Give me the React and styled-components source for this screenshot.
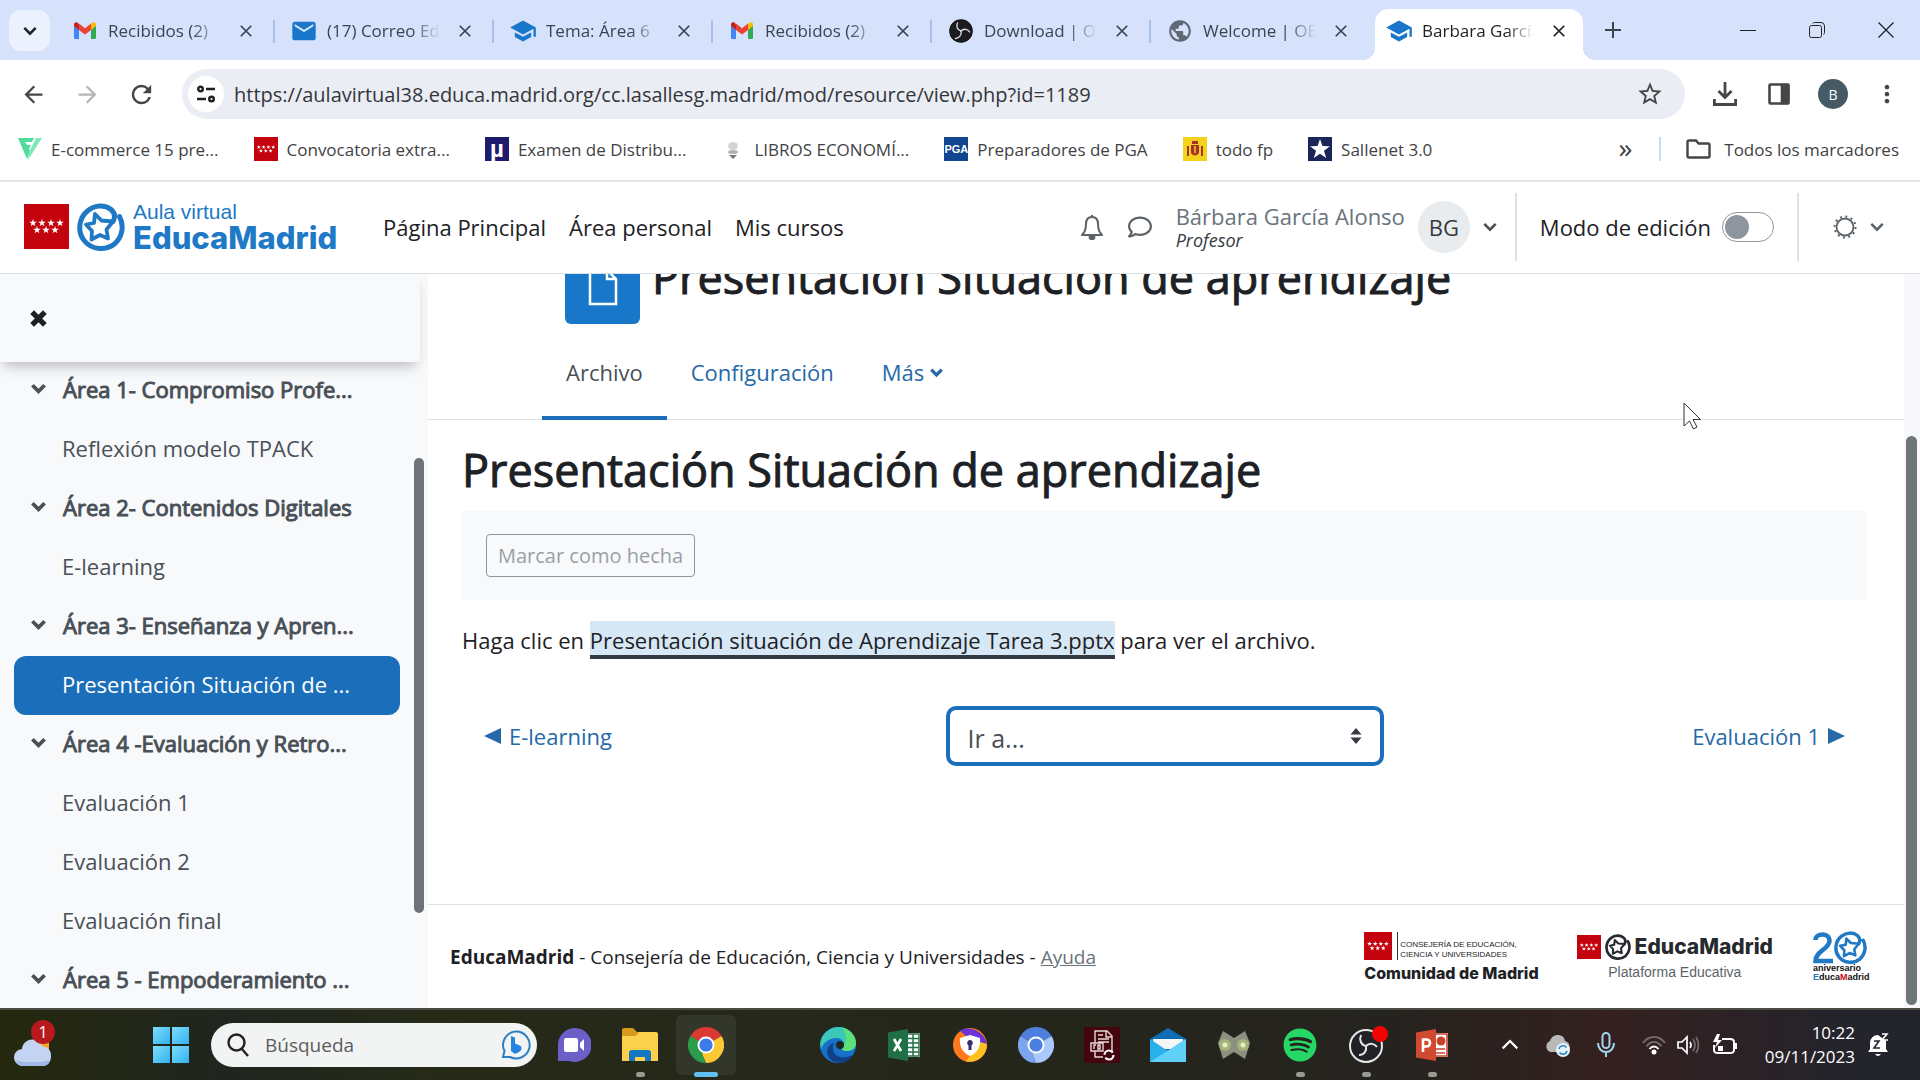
import React from 'react';
import styled, { createGlobalStyle } from 'styled-components';
import { MdSchool, MdEmail, MdArrowBack, MdArrowForward, MdRefresh, MdStarBorder, MdMoreVert, MdPublic } from 'react-icons/md';
import { FaSpotify, FaRegComment } from 'react-icons/fa';

const UI_FONT = "'Open Sans', 'Noto Sans', sans-serif";
const LOGO_FONT = "Inter, 'Liberation Sans', sans-serif";
const BLUE = '#1b6fba';
const LINK = '#2569a8';

const GlobalStyle = createGlobalStyle`
  * { box-sizing: border-box; }
  body {
    margin: 0;
    overflow: hidden;
    font-family: ${UI_FONT};
    font-size: 22px;
    color: #1d2125;
  }
  button {
    font: inherit;
    color: inherit;
    border: 0;
    padding: 0;
    background: none;
  }
  a { color: inherit; text-decoration: none; }
  svg { display: block; flex: none; }
`;

const Screen = styled.div`
  display: flex;
  flex-direction: column;
  height: 100vh;
  background: #fff;
`;

/* ---------- icons ---------- */

const Chevron = ({ size = 14, up, width = 3 }) => (
  <svg width={size} height={size} viewBox="0 0 16 16" fill="none" stroke="currentColor" strokeWidth={width}>
    <path d={up ? 'M1.5 11 8 4.5 14.5 11' : 'M1.5 4.5 8 11l6.5-6.5'} />
  </svg>
);

const Cross = ({ size = 14, width = 2 }) => (
  <svg width={size} height={size} viewBox="0 0 16 16" stroke="currentColor" strokeWidth={width}>
    <path d="M2 2 14 14M14 2 2 14" />
  </svg>
);

const Gmail = () => (
  <svg width="24" height="24" viewBox="0 0 24 24">
    <path fill="#4285f4" d="M1 5v13.500Q1 20 2.500 20H6V9z" />
    <path fill="#34a853" d="M23 5v13.500q0 1.500-1.500 1.500H18V9z" />
    <path fill="#fbbc04" d="M18 5.500V11l5-4V5.500c0-2.300-2.300-3-4-1.700z" />
    <path fill="#c5221f" d="M1 7l5 4V5.500L4.800 3.700C3.200 2.700 1 3.500 1 5.500z" />
    <path fill="#ea4335" d="M6 11V4.600l6 4.600 6-4.600V11l-6 4.500z" />
  </svg>
);

const ObsIcon = () => (
  <svg width="24" height="24" viewBox="0 0 24 24">
    <circle cx="12" cy="12" r="11.200" fill="#1c1c20" stroke="#141618" strokeWidth="1.200" />
    <g fill="none" stroke="#dde2e6" strokeWidth="1.300" strokeLinecap="round">
      <path d="M12 12C8 11 7 7 8.500 4" />
      <path d="M12 12c3-3 7-1.700 8.600 1" />
      <path d="M12 12c1 4-2 7-5.500 7.500" />
    </g>
  </svg>
);

const STARS = [[9, 19], [18, 19], [27, 19], [36, 19], [13, 26], [22, 26], [31, 26]];
const starPath = (cx, cy, r, inner = 0.4) => {
  let d = '';
  for (let i = 0; i < 10; i += 1) {
    const a = (Math.PI / 5) * i - Math.PI / 2;
    const k = i % 2 ? r * inner : r;
    d += `${i ? 'L' : 'M'}${cx + k * Math.cos(a)} ${cy + k * Math.sin(a)}`;
  }
  return `${d}Z`;
};

const MadridFlag = ({ size = 45 }) => (
  <svg width={size} height={size} viewBox="0 0 45 45">
    <path fill="#c3040f" d="M0 0h45v45H0z" />
    {STARS.map(([x, y]) => <path key={`${x}-${y}`} fill="#fff" d={starPath(x, y, 4)} />)}
  </svg>
);

const EducaStar = ({ size = 48, color = '#2079c5' }) => (
  <svg width={size} height={size} viewBox="0 0 48 48" fill="none" stroke={color} strokeLinejoin="round" strokeLinecap="round">
    <path strokeWidth="5" d="M42.500 13.500C47 22 46 33 38 40.500 29 48 15 47 7.500 38 0 29 1.500 15 11 7.500 18 2 28 1.500 34 6.500c4 3.500 4.500 7.500 2 12" />
    <path strokeWidth="3.800" d="M18 11l6.500 6.500 11.500 1-6.500 8 1.500 9-8-3.500-8.500 4.500.5-8.500L9 21.500l8-1.500z" />
  </svg>
);

const Bell = () => (
  <svg width="24" height="26" viewBox="0 0 24 26" fill="none" stroke="currentColor" strokeWidth="2" strokeLinejoin="round">
    <path d="M12 3C8 3 6 6 6 10c0 6-1.500 8.500-4 11h20c-2.500-2.500-4-5-4-11 0-4-2-7-6-7z" />
    <path d="M12 1v2M9.500 23a2.500 2.200 0 0 0 5 0z" fill="currentColor" />
  </svg>
);

const Sun = () => (
  <svg width="24" height="24" viewBox="0 0 24 24" fill="none" stroke="currentColor">
    <circle cx="12" cy="12" r="8.500" strokeWidth="1.800" />
    <circle cx="12" cy="12" r="10.500" strokeWidth="2" strokeDasharray="2 3.500" />
  </svg>
);

const Tune = () => (
  <svg width="20" height="20" viewBox="0 0 20 20" fill="none" stroke="#1f1f1f" strokeWidth="2.400">
    <circle cx="4.500" cy="5" r="2.300" />
    <path d="M10 5h9M1 15h9" />
    <circle cx="15.500" cy="15" r="2.300" />
  </svg>
);

const Download = () => (
  <svg width="26" height="26" viewBox="0 0 26 26" fill="none" stroke="#444746" strokeWidth="2.800">
    <path d="M13 1v15M6.500 10 13 16.500 19.500 10M2.400 18v5.500h21.200V18" />
  </svg>
);

const SidePanel = () => (
  <svg width="22" height="22" viewBox="0 0 22 22" fill="none" stroke="#444746" strokeWidth="2.600">
    <rect x="1.500" y="1.500" width="19" height="19" rx="1" />
    <path fill="#444746" d="M14 2h6v18h-6z" />
  </svg>
);

const FolderOutline = () => (
  <svg width="25" height="20" viewBox="0 0 25 20" fill="none" stroke="#444746" strokeWidth="2.400">
    <path d="M3 1.500h7l2.500 3H22q1.500 0 1.500 1.500v11q0 1.500-1.500 1.500H3q-1.500 0-1.500-1.500V3q0-1.500 1.500-1.500z" />
  </svg>
);

/* ---------- tab strip ---------- */

const TabStrip = styled.div`
  display: flex;
  align-items: flex-end;
  flex: none;
  height: 60px;
  padding-left: 9px;
  background: #d6e2fb;
`;

const TabSearch = styled.button`
  display: grid;
  place-items: center;
  width: 41px;
  height: 41px;
  margin: 0 6px 9px 0;
  border-radius: 12px;
  background: #ebf2fe;
`;

const Tab = styled.div`
  position: relative;
  display: flex;
  align-items: center;
  flex: 0 1 219px;
  min-width: 0;
  height: 51px;
  padding: 0 22px 8px 17px;
  color: #3c4450;

  &::after {
    content: '';
    position: absolute;
    right: 0;
    top: 11px;
    width: 2px;
    height: 23px;
    background: ${(p) => (p.$plain ? 'transparent' : '#a9c0ee')};
  }
`;

const ActiveTab = styled(Tab)`
  flex: 0 1 208px;
  margin: 0 5px;
  padding: 0 17px 8px 12px;
  border-radius: 14px 14px 0 0;
  background: #fff;
  color: #1f1f1f;

  &::before,
  &::after {
    content: '';
    position: absolute;
    top: auto;
    bottom: 0;
    width: 12px;
    height: 12px;
  }
  &::before {
    left: -12px;
    background: radial-gradient(circle at 0 0, transparent 12px, #fff 12px);
  }
  &::after {
    right: -12px;
    background: radial-gradient(circle at 100% 0, transparent 12px, #fff 12px);
  }
`;

const TabTitle = styled.span`
  flex: 1;
  margin: 0 18px 0 11px;
  overflow: hidden;
  white-space: nowrap;
  font-size: 17px;
  mask-image: linear-gradient(to right, #000 75%, transparent 100%);
`;

const NewTab = styled.button`
  display: grid;
  place-items: center;
  width: 40px;
  height: 60px;
  margin-left: 5px;
`;

const WindowButtons = styled.div`
  display: flex;
  margin-left: auto;

  button {
    display: grid;
    place-items: center;
    width: 69px;
    height: 60px;
  }
`;

const TABS = [
  { icon: <Gmail />, title: 'Recibidos (2)' },
  { icon: <MdEmail size={28} color="#1877c9" />, title: '(17) Correo Edu' },
  { icon: <MdSchool size={28} color="#1877c9" />, title: 'Tema: Área 6 |' },
  { icon: <Gmail />, title: 'Recibidos (2)' },
  { icon: <ObsIcon />, title: 'Download | OBS' },
  { icon: <MdPublic size={26} color="#5f6774" />, title: 'Welcome | OBS' },
];

const TabIcon = styled.span`
  display: flex;
  justify-content: center;
  flex: none;
  width: 24px;
`;

const BrowserTabs = () => (
  <TabStrip>
    <TabSearch aria-label="Buscar pestañas"><Chevron /></TabSearch>
    {TABS.map((tab, i) => (
      <Tab key={tab.title + String(i)} $plain={i === TABS.length - 1}>
        <TabIcon>{tab.icon}</TabIcon>
        <TabTitle>{tab.title}</TabTitle>
        <button aria-label="Cerrar pestaña"><Cross /></button>
      </Tab>
    ))}
    <ActiveTab>
      <TabIcon><MdSchool size={28} color="#1877c9" /></TabIcon>
      <TabTitle>Barbara García</TabTitle>
      <button aria-label="Cerrar pestaña"><Cross /></button>
    </ActiveTab>
    <NewTab aria-label="Nueva pestaña">
      <svg width="16" height="16" viewBox="0 0 16 16" stroke="#3c4450" strokeWidth="2"><path d="M8 0v16M0 8h16" /></svg>
    </NewTab>
    <WindowButtons>
      <button aria-label="Minimizar">
        <svg width="16" height="16" stroke="#222"><path d="M0 8.500h16" /></svg>
      </button>
      <button aria-label="Restaurar">
        <svg width="16" height="16" fill="none" stroke="#222">
          <rect x=".5" y="3.500" width="12" height="12" rx="2" />
          <path d="M3.500 1.500q1-1 2-1H12q3.500 0 3.500 3.500v6.500q0 1.500-1 2" />
        </svg>
      </button>
      <button aria-label="Cerrar"><Cross size={20} width={1} /></button>
    </WindowButtons>
  </TabStrip>
);

/* ---------- address bar ---------- */

const Toolbar = styled.div`
  display: flex;
  align-items: center;
  flex: none;
  height: 68px;
  padding: 0 6px;
  color: #444746;
`;

const ToolButton = styled.button`
  display: grid;
  place-items: center;
  width: 54px;
  height: 50px;
  color: ${(p) => (p.$dim ? '#b4b6b8' : '#444746')};
`;

const AddressBar = styled.div`
  display: flex;
  align-items: center;
  flex: 1;
  height: 50px;
  margin: 0 13px 0 14px;
  padding: 0 21px 0 6px;
  border-radius: 25px;
  background: #ebedf5;
`;

const SiteInfo = styled.button`
  display: grid;
  place-items: center;
  width: 36px;
  height: 36px;
  border-radius: 50%;
  background: #fff;
`;

const Url = styled.input`
  flex: 1;
  margin-left: 10px;
  padding: 0;
  border: 0;
  background: none;
  font: 20px ${UI_FONT};
  color: #33363a;
  outline: 0;
`;

const Profile = styled.span`
  display: grid;
  place-items: center;
  width: 30px;
  height: 30px;
  border-radius: 50%;
  background: #455a64;
  color: #fff;
  font-size: 14px;
`;

const AddressRow = () => (
  <Toolbar>
    <ToolButton aria-label="Atrás"><MdArrowBack size={27} /></ToolButton>
    <ToolButton aria-label="Adelante" $dim><MdArrowForward size={27} /></ToolButton>
    <ToolButton aria-label="Recargar"><MdRefresh size={29} /></ToolButton>
    <AddressBar>
      <SiteInfo aria-label="Información del sitio"><Tune /></SiteInfo>
      <Url aria-label="Dirección" defaultValue="https://aulavirtual38.educa.madrid.org/cc.lasallesg.madrid/mod/resource/view.php?id=1189" />
      <MdStarBorder size={28} />
    </AddressBar>
    <ToolButton aria-label="Descargas"><Download /></ToolButton>
    <ToolButton aria-label="Panel lateral"><SidePanel /></ToolButton>
    <ToolButton aria-label="Perfil"><Profile>B</Profile></ToolButton>
    <ToolButton aria-label="Menú"><MdMoreVert size={28} /></ToolButton>
  </Toolbar>
);

/* ---------- bookmarks ---------- */

const Bookmarks = styled.div`
  display: flex;
  align-items: center;
  flex: none;
  gap: 35px;
  height: 54px;
  padding: 0 21px 10px 18px;
  border-bottom: 2px solid #e6e6e6;
  font-size: 17px;
  color: #3f4246;
  white-space: nowrap;
`;

const Bookmark = styled.a`
  display: flex;
  align-items: center;
  gap: 9px;
`;

const MoreBookmarks = styled.button`
  margin-left: auto;
  padding-bottom: 5px;
  font-size: 28px;
  line-height: 28px;
`;

const AllBookmarks = styled(Bookmark)`
  gap: 13px;
  height: 24px;
  margin-left: -8px;
  padding-left: 25px;
  border-left: 2px solid #c8dcec;
`;

const Badge = styled.span`
  display: grid;
  place-items: center;
  width: 24px;
  height: 24px;
  background: ${(p) => p.$bg};
  color: #fff;
  font: 700 ${(p) => p.$size}px/1 'Liberation Sans', sans-serif;
`;

const BOOKMARKS = [
  {
    text: 'E-commerce 15 pre...',
    icon: (
      <svg width="24" height="24" viewBox="0 0 24 24">
        <path fill="#4fdc9a" d="M0 1h16l-2 4H7l2 3h4l-2 4 1 2-3 8z" />
        <path fill="#7fe8bb" d="M18 1h6L10 23l1-8z" />
      </svg>
    ),
  },
  { text: 'Convocatoria extra...', icon: <MadridFlag size={24} /> },
  { text: 'Examen de Distribu...', icon: <Badge $bg="#1f1c6e" $size={24}>µ</Badge> },
  {
    text: 'LIBROS ECONOMÍ...',
    icon: (
      <svg width="24" height="24" viewBox="0 0 24 24">
        <ellipse cx="12" cy="9" rx="5" ry="4" fill="#d4d4d4" />
        <ellipse cx="12" cy="15" rx="5" ry="2" fill="#b3b3b3" />
        <path fill="#777" d="M8 18h8l-4 4z" />
      </svg>
    ),
  },
  { text: 'Preparadores de PGA', icon: <Badge $bg="#114590" $size={11}>PGA</Badge> },
  {
    text: 'todo fp',
    icon: (
      <svg width="24" height="24" viewBox="0 0 24 24">
        <path fill="#f2d21b" d="M0 0h24v24H0z" />
        <path fill="#a8322a" d="M8 8h8v8q-4 5-8 0zM9 4h6v3H9zM4 9h2v10H4zM18 9h2v10h-2z" />
        <path fill="#d9a441" d="M11 9h2v7h-2z" />
      </svg>
    ),
  },
  {
    text: 'Sallenet 3.0',
    icon: (
      <svg width="24" height="24" viewBox="0 0 24 24">
        <path fill="#1c2558" d="M0 0h24v24H0z" />
        <path fill="#fff" d={starPath(12, 12.5, 10.5)} />
      </svg>
    ),
  },
];

const BookmarksBar = () => (
  <Bookmarks>
    {BOOKMARKS.map((b) => <Bookmark key={b.text} href="#">{b.icon}{b.text}</Bookmark>)}
    <MoreBookmarks aria-label="Más marcadores">»</MoreBookmarks>
    <AllBookmarks href="#"><FolderOutline />Todos los marcadores</AllBookmarks>
  </Bookmarks>
);

/* ---------- site header ---------- */

const SiteHeader = styled.header`
  display: flex;
  align-items: center;
  flex: none;
  height: 92px;
  padding: 0 36px 2px 24px;
  border-bottom: 1px solid #dcdfe2;
  white-space: nowrap;
`;

const Logo = styled.a`
  display: flex;
  align-items: center;
  gap: 8px;
  width: 359px;
  color: #2079c5;
`;

const LogoText = styled.span`
  display: flex;
  flex-direction: column;
  font: 21px/22px 'Liberation Sans', sans-serif;

  b {
    font: 800 31px/30px ${LOGO_FONT};
  }
`;

const SiteNav = styled.nav`
  display: flex;
  gap: 23px;
  flex: 1;
`;

const HeaderIcons = styled.div`
  display: flex;
  gap: 24px;
  margin-right: 24px;
  color: #5c6368;
`;

const UserMenu = styled.button`
  display: flex;
  align-items: center;
  gap: 13px;
  height: 68px;
  padding-right: 18px;
  border-right: 2px solid #dee2e6;
  color: #495057;
  text-align: left;
`;

const UserName = styled.span`
  display: flex;
  flex-direction: column;
  line-height: 26px;
  color: #6a737b;

  em {
    font-size: 18px;
    line-height: 22px;
    color: #343a40;
  }
`;

const Initials = styled.span`
  display: grid;
  place-items: center;
  width: 52px;
  height: 52px;
  border-radius: 50%;
  background: #e9ecef;
  color: #343a40;
`;

const EditMode = styled.label`
  display: flex;
  align-items: center;
  gap: 11px;
  height: 68px;
  padding: 0 23px;
  border-right: 2px solid #dee2e6;
`;

const Switch = styled.input`
  appearance: none;
  width: 52px;
  height: 30px;
  margin: 0;
  padding: 2px;
  border: 1px solid #8f959e;
  border-radius: 15px;

  &::before {
    content: '';
    display: block;
    width: 24px;
    height: 24px;
    border-radius: 50%;
    background: #8f959e;
  }
`;

const ThemeMenu = styled.button`
  display: flex;
  align-items: center;
  gap: 13px;
  padding-left: 34px;
  color: #5c6368;
`;

const Header = () => (
  <SiteHeader>
    <Logo href="#">
      <MadridFlag />
      <EducaStar />
      <LogoText>Aula virtual<b>EducaMadrid</b></LogoText>
    </Logo>
    <SiteNav>
      <a href="#">Página Principal</a>
      <a href="#">Área personal</a>
      <a href="#">Mis cursos</a>
    </SiteNav>
    <HeaderIcons>
      <button aria-label="Notificaciones"><Bell /></button>
      <button aria-label="Mensajes"><FaRegComment size={24} /></button>
    </HeaderIcons>
    <UserMenu>
      <UserName>Bárbara García Alonso<em>Profesor</em></UserName>
      <Initials>BG</Initials>
      <Chevron />
    </UserMenu>
    <EditMode>
      Modo de edición
      <Switch type="checkbox" role="switch" />
    </EditMode>
    <ThemeMenu aria-label="Tema"><Sun /><Chevron /></ThemeMenu>
  </SiteHeader>
);

/* ---------- course index ---------- */

const Body = styled.div`
  display: flex;
  flex: 1;
  min-height: 0;
`;

const Drawer = styled.aside`
  display: flex;
  flex-direction: column;
  flex: none;
  width: 428px;
  background: #f8f9fb;
  overflow: hidden;
`;

const DrawerTop = styled.div`
  z-index: 1;
  display: flex;
  align-items: center;
  flex: none;
  height: 88px;
  margin-right: 8px;
  padding: 0 30px;
  background: #f8f9fb;
  box-shadow: 0 8px 12px -4px rgba(0, 0, 0, .25);
`;

const DrawerScroll = styled.div`
  display: flex;
  flex: 1;
  min-height: 0;
  padding: 0 4px 0 14px;
`;

const Index = styled.ul`
  flex: 1;
  margin: -1px 14px 0 0;
  padding: 0;
  list-style: none;
`;

const IndexRow = styled.li`
  display: flex;
  align-items: center;
  gap: 17px;
  height: 59px;
  padding: 0 0 4px ${(p) => (p.$section ? 17 : 48)}px;
  border-radius: 12px;
  background: ${(p) => (p.$active ? BLUE : 'transparent')};
  color: ${(p) => (p.$active ? '#fff' : '#495057')};
  -webkit-text-stroke: ${(p) => (p.$section ? '1px' : '0')};
  white-space: nowrap;
`;

const Thumb = styled.div`
  flex: none;
  width: ${(p) => p.$width}px;
  height: ${(p) => p.$height}px;
  margin-top: ${(p) => p.$top}px;
  border-radius: 6px;
  background: ${(p) => p.$color};
`;

const INDEX = [
  { text: 'Área 1- Compromiso Profe...', section: true },
  { text: 'Reflexión modelo TPACK' },
  { text: 'Área 2- Contenidos Digitales', section: true },
  { text: 'E-learning' },
  { text: 'Área 3- Enseñanza y Apren...', section: true },
  { text: 'Presentación Situación de ...', active: true },
  { text: 'Área 4 -Evaluación y Retro...', section: true },
  { text: 'Evaluación 1' },
  { text: 'Evaluación 2' },
  { text: 'Evaluación final' },
  { text: 'Área 5 - Empoderamiento ...', section: true },
];

const CourseIndex = () => (
  <Drawer>
    <DrawerTop>
      <button aria-label="Cerrar índice"><Cross size={17} width={5} /></button>
    </DrawerTop>
    <DrawerScroll>
      <Index>
        {INDEX.map((row) => (
          <IndexRow key={row.text} $section={row.section} $active={row.active}>
            {row.section && <Chevron size={15} width={4} />}
            <a href="#">{row.text}</a>
          </IndexRow>
        ))}
      </Index>
      <Thumb $width={10} $height={455} $top={96} $color="#6f7277" />
    </DrawerScroll>
  </Drawer>
);

/* ---------- page ---------- */

// the page is scrolled to its end, so the content hangs from the bottom edge
const Page = styled.main`
  display: flex;
  flex-direction: column;
  justify-content: flex-end;
  flex: 1;
  min-width: 0;
  overflow: hidden;
`;

const ActivityHeader = styled.div`
  display: flex;
  gap: 12px;
  padding-left: 137px;
`;

const ActivityIcon = styled.span`
  display: grid;
  place-items: center;
  width: 75px;
  height: 75px;
  border-radius: 6px;
  background: #1877c9;
`;

const Title = styled.h1`
  margin: 0;
  font-size: 45px;
  line-height: 56px;
  font-weight: 400;
  -webkit-text-stroke: 1px;
  white-space: nowrap;
`;

const PageTabs = styled.nav`
  display: flex;
  height: 96px;
  padding-left: 114px;
  border-bottom: 1px solid #dee2e6;
`;

const PageTab = styled.a`
  display: flex;
  align-items: center;
  gap: 6px;
  height: 96px;
  padding: 4px 24px 0;
  border-bottom: 4px solid ${(p) => (p.$active ? BLUE : 'transparent')};
  color: ${(p) => (p.$active ? '#495057' : LINK)};
`;

const Content = styled.section`
  padding: 22px 37px 0 34px;
`;

const Completion = styled.div`
  margin: 13px 0 21px;
  padding: 23px 24px;
  background: #f8f9fa;

  button {
    height: 43px;
    padding: 0 11px;
    border: 1px solid #8f959e;
    border-radius: 4px;
    font-size: 20px;
    color: #9a9fa5;
  }
`;

const Instruction = styled.p`
  margin: 0;
  line-height: 30px;

  a {
    display: inline-block;
    padding-top: 4px;
    border-bottom: 4px solid #343a40;
    background: #d6e7f5;
  }
`;

const Pager = styled.div`
  display: grid;
  grid-template-columns: 1fr 438px 1fr;
  align-items: center;
  margin: 47px 22px 138px;
  color: ${LINK};

  > :last-child { justify-self: end; }
`;

const PagerLink = styled.a`
  display: flex;
  align-items: center;
  gap: 8px;
`;

const JumpTo = styled.div`
  position: relative;

  select {
    appearance: none;
    display: block;
    width: 100%;
    height: 60px;
    padding: 4px 18px 0;
    border: 4px solid ${BLUE};
    border-radius: 10px;
    background: #fff;
    font: 25px ${UI_FONT};
    color: #495057;
  }
  svg {
    position: absolute;
    right: 22px;
    top: 22px;
  }
`;

const PageFooter = styled.footer`
  display: flex;
  align-items: center;
  flex: none;
  height: 104px;
  padding: 0 35px 0 22px;
  border-top: 1px solid #dee2e6;
  font-size: 19px;
  white-space: nowrap;

  p { flex: 1; margin: 0; }
  p a { color: #6a737b; text-decoration: underline; }
`;

const Comunidad = styled.div`
  margin-right: 38px;
  font: 800 16px/18px ${LOGO_FONT};

  div {
    display: flex;
    align-items: flex-end;
    gap: 5px;
    margin-bottom: 4px;
    font: 8px/10px 'Liberation Sans', sans-serif;
  }
  span {
    padding-left: 2px;
    border-left: 1px solid #333;
    padding-top: 8px;
  }
`;

const Platform = styled.div`
  display: grid;
  grid-template-columns: auto auto auto;
  align-items: center;
  gap: 4px;
  margin-right: 40px;
  font: 800 21px/24px ${LOGO_FONT};
  color: #26292e;

  small {
    grid-column: 1 / -1;
    justify-self: center;
    font: 14px/16px 'Liberation Sans', sans-serif;
    color: #5c6368;
  }
`;

const Anniversary = styled.div`
  display: flex;
  flex-wrap: wrap;
  align-items: center;
  width: 56px;
  font: 700 9px/9px 'Liberation Sans', sans-serif;
  color: #111;

  i { color: #c8051b; font-style: normal; }
  i:first-child { color: #2079c5; }
`;

const ScrollTrack = styled.div`
  flex: none;
  width: 16px;
  padding-left: 2px;
  background: #f8f8fb;
`;

const Arrow = ({ left }) => (
  <svg width="17" height="16" viewBox="0 0 17 16" fill="currentColor">
    <path d={left ? 'M17 0v16L0 8z' : 'M0 0v16l17-8z'} />
  </svg>
);

const Activity = () => (
  <Page>
    <ActivityHeader>
      <ActivityIcon>
        <svg width="30" height="38" viewBox="0 0 30 38" fill="none" stroke="#fff" strokeWidth="2.500">
          <path d="M2 2h17l9 9v25H2zM19 2v9h9" />
        </svg>
      </ActivityIcon>
      <Title as="div">Presentación Situación de aprendizaje</Title>
    </ActivityHeader>
    <PageTabs>
      <PageTab href="#" $active>Archivo</PageTab>
      <PageTab href="#">Configuración</PageTab>
      <PageTab href="#">Más<Chevron size={13} width={4} /></PageTab>
    </PageTabs>
    <Content>
      <Title>Presentación Situación de aprendizaje</Title>
      <Completion><button disabled>Marcar como hecha</button></Completion>
      <Instruction>
        Haga clic en <a href="#">Presentación situación de Aprendizaje Tarea 3.pptx</a> para ver el archivo.
      </Instruction>
      <Pager>
        <PagerLink href="#"><Arrow left />E-learning</PagerLink>
        <JumpTo>
          <select aria-label="Ir a..."><option>Ir a...</option></select>
          <svg width="12" height="16" viewBox="0 0 12 16" fill="#343a40"><path d="M6 0l5.500 6.500H.5zM6 16l5.500-6.500H.5z" /></svg>
        </JumpTo>
        <PagerLink href="#">Evaluación 1<Arrow /></PagerLink>
      </Pager>
    </Content>
    <PageFooter>
      <p><strong>EducaMadrid</strong> - Consejería de Educación, Ciencia y Universidades - <a href="#">Ayuda</a></p>
      <Comunidad>
        <div><MadridFlag size={28} /><span>CONSEJERÍA DE EDUCACIÓN,<br />CIENCIA Y UNIVERSIDADES</span></div>
        Comunidad de Madrid
      </Comunidad>
      <Platform>
        <MadridFlag size={24} />
        <EducaStar size={26} color="#26292e" />
        EducaMadrid
        <small>Plataforma Educativa</small>
      </Platform>
      <Anniversary>
        <svg width="21" height="32" viewBox="0 0 21 32" fill="none" stroke="#2079c5" strokeWidth="4.500">
          <path d="M2.500 8c0-7 14-8 14 1 0 8-14 10-14 20H20" />
        </svg>
        <EducaStar size={33} />
        <span>aniversario</span>
        <span><i>E</i>duca<i>M</i>adrid</span>
      </Anniversary>
    </PageFooter>
  </Page>
);

/* ---------- taskbar ---------- */

const Taskbar = styled.div`
  display: flex;
  align-items: center;
  flex: none;
  height: 72px;
  padding: 0 30px 0 14px;
  border-top: 2px solid #4a4b42;
  background: linear-gradient(90deg, #25290f 0, #20251f 12%, #262a18 22%, #24261b 55%, #25231f 72%, #34201f 84%, #24242c 96%);
  color: #fff;
`;

const Weather = styled.button`
  position: relative;
  width: 40px;
  height: 50px;
`;

const Count = styled.span`
  position: absolute;
  top: 0;
  right: -1px;
  width: 24px;
  height: 24px;
  border-radius: 50%;
  background: #b8191f;
  font-size: 16px;
  line-height: 24px;
`;

const Start = styled.button`
  display: grid;
  grid-template-columns: 17px 17px;
  gap: 2px;
  margin: 0 22px 0 99px;

  i {
    height: 17px;
    background: linear-gradient(135deg, #7fdcfb, #31b2f0);
  }
`;

const SearchBox = styled.label`
  display: flex;
  align-items: center;
  gap: 16px;
  width: 326px;
  height: 44px;
  margin-right: 4px;
  padding: 0 6px 0 16px;
  border-radius: 22px;
  background: #f2f3f3;

  input {
    flex: 1;
    min-width: 0;
    border: 0;
    padding: 0;
    background: none;
    font: 19px ${UI_FONT};
  }
  input::placeholder { color: #5d5d5d; opacity: 1; }
`;

const TaskButton = styled.button`
  position: relative;
  display: grid;
  place-items: center;
  flex: 0 1 66px;
  height: 66px;

  &::after {
    content: '';
    position: absolute;
    bottom: 1px;
    width: ${(p) => (p.$active ? 24 : 9)}px;
    height: 5px;
    border-radius: 3px;
    background: ${(p) => (p.$active ? '#62c0ee' : p.$open ? '#9a9a94' : 'transparent')};
  }
  > span {
    display: grid;
    place-items: center;
    width: 60px;
    height: 60px;
    border-radius: 6px;
    background: ${(p) => (p.$active ? '#33362a' : 'none')};
  }
`;

const Tray = styled.div`
  display: flex;
  align-items: center;
  margin-left: auto;

  > button {
    display: grid;
    place-items: center;
    width: 48px;
  }
`;

const TrayStatus = styled.button`
  display: flex;
  align-items: center;
  gap: 11px;
  margin-left: 12px;
`;

const Clock = styled.time`
  width: 93px;
  margin: 0 13px 0 24px;
  font-size: 17px;
  line-height: 24px;
  text-align: right;
`;

const Chrome = ({ colors }) => (
  <svg width="36" height="36" viewBox="0 0 36 36">
    <path fill={colors[0]} d="M18 18 2.400 9A18 18 0 0 1 33.600 9z" />
    <path fill={colors[1]} d="M18 18 33.600 9A18 18 0 0 1 18 36l-4-9z" />
    <path fill={colors[2]} d="M18 18 14 27l4 9A18 18 0 0 1 2.400 9z" />
    <path fill={colors[0]} d="M18 9.500h15.800L33 8 18 6z" />
    <circle cx="18" cy="18" r="8.500" fill="#fff" />
    <circle cx="18" cy="18" r="6.600" fill={colors[3]} />
  </svg>
);

const TASKS = [
  {
    name: 'Chat',
    icon: (
      <svg width="34" height="34" viewBox="0 0 34 34">
        <path fill="#6c5fc7" d="M17 0a17 17 0 1 1-5 33H1V17A17 17 0 0 1 17 0z" />
        <rect x="7" y="10" width="14" height="14" rx="2" fill="#fff" />
        <path fill="#fff" d="M23 15l4-4v12l-4-4z" />
      </svg>
    ),
  },
  {
    name: 'Explorador de archivos',
    open: true,
    icon: (
      <svg width="36" height="34" viewBox="0 0 36 34">
        <path fill="#d9981e" d="M0 2q0-2 2-2h9l4 4h19v10H0z" />
        <path fill="#fbd04c" d="M0 8h14l3-4h17q2 0 2 2v27H0z" />
        <path fill="#1378c0" d="M7 33v-8q0-3 3-3h16q3 0 3 3v8h-6v-4H13v4z" />
      </svg>
    ),
  },
  { name: 'Google Chrome', active: true, icon: <Chrome colors={['#db3a32', '#fcc934', '#2a9c4a', '#3b7de8']} /> },
  { name: '' },
  {
    name: 'Edge',
    icon: (
      <svg width="36" height="36" viewBox="0 0 36 36">
        <circle cx="18" cy="18" r="18" fill="#1771c8" />
        <path fill="#3bc8b8" d="M1 13C4 4 12 0 18 0c11 0 18 8 18 16 0 6-5 8-9 8-5 0-6-2-4-4 2-3 0-9-7-9C9 11 3 16 1 22c-1-4-1-6 0-9z" />
        <path fill="#5ce07a" d="M22 .5C30 2 36 9 36 16c0 6-5 8-9 8-5 0-6-2-4-4 4-6 5-12-1-19.500z" />
        <path fill="#123f86" d="M14 16c-4 9 3 19 19 12-5 9-17 10-23 4-5-6-3-14 4-16z" />
        <circle cx="20" cy="18" r="4" fill="#1c2a20" />
      </svg>
    ),
  },
  {
    name: 'Excel',
    icon: (
      <svg width="32" height="32" viewBox="0 0 32 32">
        <path fill="#fff" d="M18 4h14v24H18z" />
        <path stroke="#1f7145" strokeWidth="1.500" fill="none" d="M19 5h12v22H19M19 9.500h12M19 14h12M19 18.500h12M19 23h12M25 5v22" />
        <path fill="#1f7145" d="M0 3.500 20 0v32L0 28.500z" />
        <path stroke="#fff" strokeWidth="2.600" d="M6 10l7 12M13 10 6 22" />
      </svg>
    ),
  },
  {
    name: 'Navegador seguro',
    icon: (
      <svg width="34" height="34" viewBox="0 0 34 34">
        <circle cx="17" cy="17" r="17" fill="#ff7a1c" />
        <path fill="#6a35d8" d="M7 3C14-3 32 2 34 17L17 11z" />
        <path fill="#fcc21f" d="M34 16c0 12-10 19-21 17.500L27 14z" />
        <path fill="#fff" d="M17 7l10 3c1 9-3 15-10 18C10 25 6 19 7 10z" />
        <path fill="#3a2a70" d="M17 12a3 3 0 0 1 1.500 5.500V22h-3v-4.500A3 3 0 0 1 17 12z" />
      </svg>
    ),
  },
  { name: 'Chromium', icon: <Chrome colors={['#4f7fdc', '#a9c8fb', '#7ba5ee', '#4a80e0']} /> },
  {
    name: 'PDF',
    icon: (
      <svg width="36" height="36" viewBox="0 0 36 36" fill="none" stroke="#e8d9d9" strokeWidth="1.400">
        <path fill="#43060f" stroke="none" d="M0 0h36v36H0z" />
        <path d="M11 16V4h12l5 5v16M22 4v6h6M14 8h5M14 12h11M14 15h11M7 16h12v8H7zM11 24v6h8M10 22v-4h2M14 18v4h2v-4z" />
        <circle cx="25" cy="28" r="4.500" stroke="#fff" strokeWidth="2.200" strokeDasharray="11 3" />
      </svg>
    ),
  },
  {
    name: 'Correo',
    icon: (
      <svg width="36" height="34" viewBox="0 0 36 34">
        <path fill="#0f6cb6" d="M0 11 18 0l18 11v12H0z" />
        <path fill="#f4f6f8" d="M3 11h30v10H3z" />
        <path fill="#29b0ea" d="M0 11l18 12 18-12v23H0z" />
        <path fill="#5fd0f8" d="M0 34 36 11v23z" />
      </svg>
    ),
  },
  {
    name: 'Editor',
    icon: (
      <svg width="34" height="28" viewBox="0 0 34 28">
        <path fill="#8d9080" d="M6 0l11 7L28 0l5 12-5 16-11-7-11 7L1 12z" />
        <circle cx="8" cy="14" r="6" fill="#a3b578" />
        <circle cx="26" cy="14" r="6" fill="#a3b578" />
        <circle cx="8" cy="14" r="2.500" fill="#e7edc9" />
        <circle cx="26" cy="14" r="2.500" fill="#e7edc9" />
      </svg>
    ),
  },
  { name: 'Spotify', open: true, icon: <FaSpotify size={34} color="#25d865" /> },
  {
    name: 'OBS Studio',
    open: true,
    icon: (
      <svg width="44" height="38" viewBox="-4 0 44 38">
        <circle cx="18" cy="20" r="16" fill="#222226" stroke="#e4e6e8" strokeWidth="2" />
        <g fill="none" stroke="#e4e6e8" strokeWidth="2">
          <path d="M18 20c-5-1-7-6-5-11M18 20c4-4 9-2 11 1M18 20c1 5-2 9-7 9" />
        </g>
        <circle cx="32" cy="8" r="8" fill="#f40000" />
      </svg>
    ),
  },
  {
    name: 'PowerPoint',
    open: true,
    icon: (
      <svg width="32" height="32" viewBox="0 0 32 32">
        <path fill="#fff" d="M18 4h14v24H18z" />
        <path fill="none" stroke="#c8402a" strokeWidth="1.600" d="M19 5h12v22H19M20 20h9M20 24h9" />
        <circle cx="25" cy="12" r="4.500" fill="#c8402a" />
        <path fill="#d04a30" d="M0 3.500 20 0v32L0 28.500z" />
        <path fill="none" stroke="#fff" strokeWidth="2.600" d="M7 23V10.500h3.500a3.500 3.500 0 0 1 0 7H7" />
      </svg>
    ),
  },
];

const WindowsTaskbar = () => (
  <Taskbar>
    <Weather aria-label="El tiempo">
      <svg width="40" height="50" viewBox="0 0 40 50">
        <path fill="#f5a623" d="M26 22h9v9h-9z" />
        <path fill="#c3d4f2" d="M9 46a8.500 8.500 0 0 1-1-17C9 18 24 16 28 26c6 1 9 4 9 10 0 7-4 10-9 10z" />
        <path fill="#9fb9e8" d="M2 40c5 3 28 3 34 0-1 4-4 6-8 6H9c-4 0-6-2-7-6z" />
      </svg>
      <Count>1</Count>
    </Weather>
    <Start aria-label="Inicio"><i /><i /><i /><i /></Start>
    <SearchBox>
      <svg width="22" height="24" viewBox="0 0 22 24" fill="none" stroke="#222" strokeWidth="2.400">
        <circle cx="9.500" cy="9.500" r="8" />
        <path d="M14.500 15.500 21 23" />
      </svg>
      <input aria-label="Búsqueda" placeholder="Búsqueda" />
      <svg width="30" height="30" viewBox="0 0 30 30" fill="none" strokeWidth="2">
        <path stroke="#2b7fc4" d="M15 1.500a13.500 13.500 0 1 1-6 25.500H2l1.500-6A13.500 13.500 0 0 1 15 1.500z" />
        <path fill="#2384e0" d="M10 6l4 1.500v6l6 2.500q1.500 4-2 6l-4 2-4-3z" />
      </svg>
    </SearchBox>
    {TASKS.map((task) => (
      <TaskButton key={task.name} aria-label={task.name || 'Vacío'} $active={task.active} $open={task.open}>
        <span>{task.icon}</span>
      </TaskButton>
    ))}
    <Tray>
      <button aria-label="Iconos ocultos"><Chevron up size={18} width={2} /></button>
      <button aria-label="OneDrive">
        <svg width="26" height="26" viewBox="0 0 26 26">
          <path fill="#b9b9b9" d="M5 20a6 6 0 0 1 0-11C7 1 19 1 20 9c4 1 6 5 4 11z" />
          <circle cx="18" cy="18" r="7" fill="#e8f4fb" />
          <path fill="none" stroke="#2a86b8" strokeWidth="1.600" d="M14 17a4.200 4.200 0 0 1 7.500-1.500M22 19a4.200 4.200 0 0 1-7.500 1.500" />
        </svg>
      </button>
      <button aria-label="Micrófono">
        <svg width="18" height="26" viewBox="0 0 18 26" fill="none" stroke="#9fd6ee" strokeWidth="2">
          <rect x="5.500" y="1" width="7" height="15" rx="3.500" />
          <path d="M1 11c0 12 16 12 16 0M9 20v5" />
        </svg>
      </button>
    </Tray>
    <TrayStatus aria-label="Red, volumen y batería">
      <svg width="24" height="20" viewBox="0 0 24 20" fill="none" strokeWidth="2">
        <path stroke="#77696a" d="M1 8c6-8 16-8 22 0" />
        <path stroke="#77696a" d="M4.500 11.500c4-6 11-6 15 0" />
        <path stroke="#fff" d="M7.500 14c2.500-3.500 6.500-3.500 9 0" />
        <circle cx="12" cy="17" r="2.500" fill="#fff" />
      </svg>
      <svg width="24" height="20" viewBox="0 0 24 20" fill="none" stroke="#fff" strokeWidth="1.700">
        <path d="M1 7h4l5-5v16l-5-5H1zM13 7q2 3 0 6" />
        <path stroke="#77696a" d="M16 4q4 6 0 12M19 2q5 8 0 16" />
      </svg>
      <svg width="26" height="22" viewBox="0 0 26 22" fill="none" stroke="#fff" strokeWidth="2">
        <path d="M10 5h8q4 0 4 3v8q0 3-4 3H6q-4 0-4-3v-5M24 9v6" />
        <path fill="#fff" stroke="none" d="M5 0 1 8h4l-2 6 7-8H6l2-6zM6 12h5v5H6z" />
      </svg>
    </TrayStatus>
    <Clock>10:22<br />09/11/2023</Clock>
    <svg width="22" height="26" viewBox="0 0 22 26">
      <path fill="#fff" d="M10 3a8 8 0 0 0-8 8v6l-2 3h20l-2-3V9zM7 22h6q-3 4-6 0z" />
      <path fill="none" stroke="#24242c" strokeWidth="1.600" d="M6 9h5l-5 7h6" />
      <path fill="none" stroke="#fff" strokeWidth="1.600" d="M14 2h5l-5 6h6" />
    </svg>
  </Taskbar>
);

const Pointer = styled.svg`
  position: absolute;
  left: 1683px;
  top: 402px;
`;

const App = () => (
  <Screen>
    <GlobalStyle />
    <BrowserTabs />
    <AddressRow />
    <BookmarksBar />
    <Header />
    <Body>
      <CourseIndex />
      <Activity />
      <ScrollTrack><Thumb $width={11} $height={569} $top={162} $color="#6d7578" /></ScrollTrack>
    </Body>
    <WindowsTaskbar />
    <Pointer width="19" height="28" viewBox="0 0 19 28" fill="#fff" stroke="#333">
      <path d="M1 1v23l5.500-5 4 8 3.500-2-4-7.500h7.500z" />
    </Pointer>
  </Screen>
);

export default App;
